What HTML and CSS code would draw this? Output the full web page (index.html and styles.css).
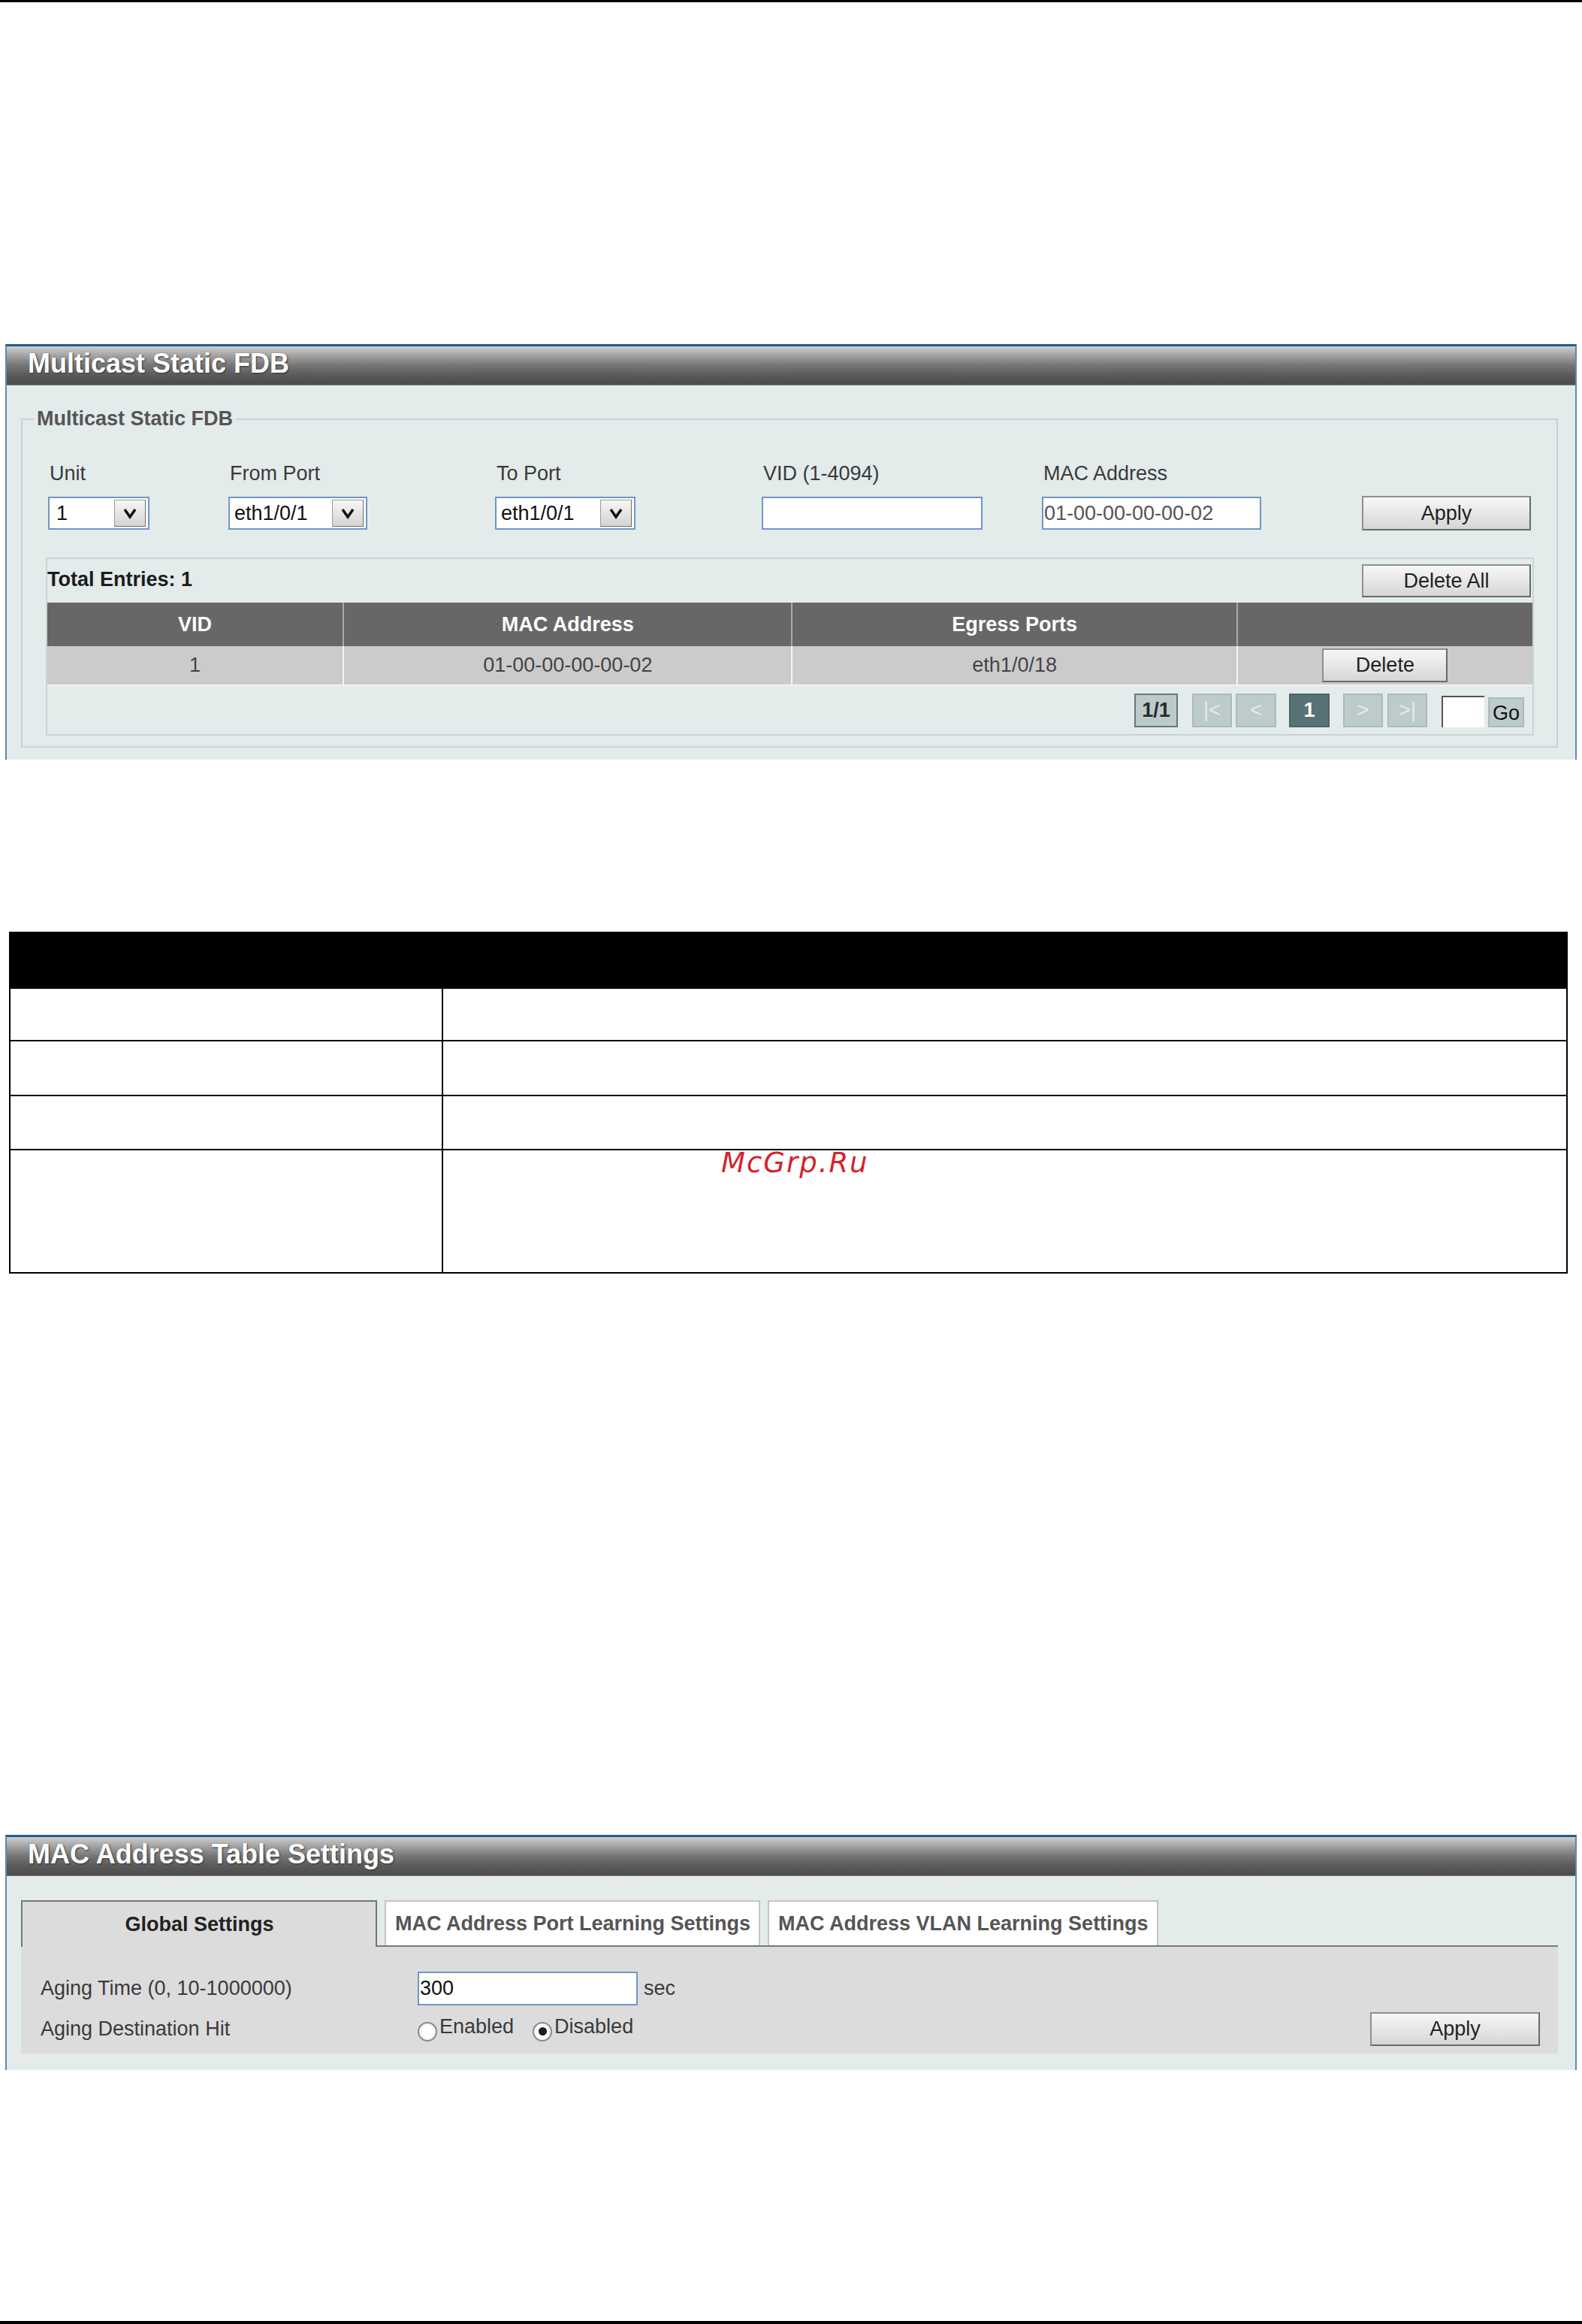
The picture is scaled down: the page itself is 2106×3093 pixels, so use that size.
FILE: index.html
```html
<!DOCTYPE html>
<html lang="en">
<head>
<meta charset="utf-8">
<title>Multicast Static FDB</title>
<link rel="stylesheet" href="styles.css">
</head>
<body>
<div class="topline"></div>

<section class="panel panel-fdb">
  <div class="panel-head">Multicast Static FDB</div>
  <div class="panel-body">
    <fieldset class="group">
      <legend>Multicast Static FDB</legend>
      <div class="fields">
        <div class="field f-unit">
          <div class="label">Unit</div>
          <div class="select s-unit"><span class="sel-text">1</span><span class="sel-btn"><svg class="chev" viewBox="0 0 20 16" width="20" height="16"><polyline points="3,3 10,13 17,3" fill="none" stroke="#111" stroke-width="3.5"/></svg></span></div>
        </div>
        <div class="field f-port">
          <div class="label">From Port</div>
          <div class="select s-port"><span class="sel-text">eth1/0/1</span><span class="sel-btn"><svg class="chev" viewBox="0 0 20 16" width="20" height="16"><polyline points="3,3 10,13 17,3" fill="none" stroke="#111" stroke-width="3.5"/></svg></span></div>
        </div>
        <div class="field f-port">
          <div class="label">To Port</div>
          <div class="select s-port2"><span class="sel-text">eth1/0/1</span><span class="sel-btn"><svg class="chev" viewBox="0 0 20 16" width="20" height="16"><polyline points="3,3 10,13 17,3" fill="none" stroke="#111" stroke-width="3.5"/></svg></span></div>
        </div>
        <div class="field f-vid">
          <div class="label">VID (1-4094)</div>
          <div class="input i-vid"></div>
        </div>
        <div class="field f-mac">
          <div class="label">MAC Address</div>
          <div class="input i-mac">01-00-00-00-00-02</div>
        </div>
        <button class="btn btn-apply">Apply</button>
      </div>

      <div class="entries">
        <div class="entries-top">
          <span class="total">Total Entries: 1</span>
          <button class="btn btn-delall">Delete All</button>
        </div>
        <table class="grid">
          <colgroup><col class="c1"><col class="c2"><col class="c3"><col class="c4"></colgroup>
          <thead>
            <tr><th>VID</th><th>MAC Address</th><th>Egress Ports</th><th></th></tr>
          </thead>
          <tbody>
            <tr><td>1</td><td>01-00-00-00-00-02</td><td>eth1/0/18</td><td><button class="btn btn-del">Delete</button></td></tr>
          </tbody>
        </table>
        <div class="pager">
          <span class="pg pg-info">1/1</span>
          <span class="pg pg-dis pg-first">|&lt;</span>
          <span class="pg pg-dis pg-prev">&lt;</span>
          <span class="pg pg-cur">1</span>
          <span class="pg pg-dis pg-next">&gt;</span>
          <span class="pg pg-dis pg-last">&gt;|</span>
          <span class="pg-input"></span>
          <span class="pg pg-go">Go</span>
        </div>
      </div>
    </fieldset>
  </div>
</section>

<div class="desc-wrap">
  <table class="desc">
    <colgroup><col class="d1"><col class="d2"></colgroup>
    <thead><tr class="dh"><th></th><th></th></tr></thead>
    <tbody>
      <tr class="r1"><td></td><td></td></tr>
      <tr class="r2"><td></td><td></td></tr>
      <tr class="r3"><td></td><td></td></tr>
      <tr class="r4"><td></td><td></td></tr>
    </tbody>
  </table>
  <div class="watermark">McGrp.Ru</div>
</div>

<section class="panel panel-mac">
  <div class="panel-head">MAC Address Table Settings</div>
  <div class="panel-body body-mac">
    <div class="tabs">
      <div class="tab tab-active">Global Settings</div>
      <div class="tab">MAC Address Port Learning Settings</div>
      <div class="tab">MAC Address VLAN Learning Settings</div>
    </div>
    <div class="tab-content">
      <div class="row">
        <span class="row-label">Aging Time (0, 10-1000000)</span>
        <span class="input i-aging">300</span>
        <span class="unit">sec</span>
      </div>
      <div class="row">
        <span class="row-label">Aging Destination Hit</span>
        <span class="radio"></span><span class="radio-text">Enabled</span>
        <span class="radio radio-on"></span><span class="radio-text">Disabled</span>
        <button class="btn btn-apply2">Apply</button>
      </div>
    </div>
  </div>
</section>

<div class="bottomline"></div>
</body>
</html>
```

FILE: styles.css
```css
* { box-sizing: border-box; }

html, body {
  margin: 0;
  padding: 0;
  background: #ffffff;
}

body {
  font-family: "Liberation Sans", Arial, sans-serif;
  font-size: 27px;
  color: #333;
  width: 2106px;
}

.topline {
  height: 3px;
  background: #000;
}

.bottomline {
  height: 5px;
  background: #000;
  margin-top: 334px;
}

/* Panels */
.panel {
  margin: 455px 7px 0 7px;
  border-top: 3px solid #1f5d8c;
  border-left: 2px solid #5f89ae;
  border-right: 2px solid #5f89ae;
}

.panel-mac {
  margin-top: 747px;
}

.panel-head {
  height: 52px;
  padding: 2px 0 0 28px;
  line-height: 41px;
  font-size: 36px;
  font-weight: bold;
  color: #fff;
  text-shadow: 1px 1px 2px #333, 0 0 1px #666;
  background: linear-gradient(#cfcfcf 0%, #a6a6a6 22%, #787878 48%, #5a5a5a 75%, #4c4c4c 100%);
  border-bottom: 1px solid #7c8484;
}

.panel-body {
  background: #e3ebeb;
  padding: 29px 23px 16px 19px;
}

/* Fieldset */
.group {
  margin: 0;
  padding: 0 0 14px 15px;
  border: 2px solid #c7d2d2;
  min-width: 0;
}

.group legend {
  padding: 0 4px;
  font-weight: bold;
  color: #555;
  line-height: 31px;
}

.fields {
  display: flex;
  align-items: flex-end;
  margin-top: 42px;
  padding-left: 19px;
}

.field {
  display: flex;
  flex-direction: column;
}

.f-unit { width: 240px; }
.f-port { width: 355px; }
.f-vid { width: 373px; }
.f-mac { width: 292px; }

.label {
  line-height: 31px;
  margin-bottom: 15px;
  color: #3a3a3a;
  padding-left: 2px;
}

.select {
  display: flex;
  align-items: center;
  height: 44px;
  background: #fff;
  border: 2px solid #6f97c6;
  padding: 2px 3px 2px 0;
}

.s-unit { width: 135px; }
.s-port { width: 185px; }
.s-port2 { width: 187px; }

.sel-text {
  flex: 1;
  padding-left: 9px;
  color: #111;
}

.s-port .sel-text, .s-port2 .sel-text { padding-left: 6px; }

.sel-btn {
  width: 42px;
  height: 36px;
  display: flex;
  align-items: center;
  justify-content: center;
  background: linear-gradient(#f6f6f6, #d4d4d4);
  border: 1px solid #9a9a9a;
  border-right-color: #6e6e6e;
  border-bottom-color: #6e6e6e;
}

.chev { display: block; }

.input {
  display: flex;
  align-items: center;
  height: 44px;
  background: #fff;
  border: 2px solid #6f97c6;
  color: #555;
}

.i-vid { width: 294px; }
.i-mac { width: 292px; padding-left: 1px; }

.btn {
  font-family: "Liberation Sans", Arial, sans-serif;
  font-size: 27px;
  color: #222;
  background: linear-gradient(#f7f7f7, #d6d6d6);
  border: 2px solid #8f8f8f;
  border-right-color: #6a6a6a;
  border-bottom-color: #6a6a6a;
  padding: 0;
  margin: 0;
}

.btn-apply {
  width: 225px;
  height: 46px;
  margin-left: auto;
  margin-right: 34px;
  margin-bottom: -1px;
}

/* Entries box */
.entries {
  margin: 37px 30px 0 16px;
  border: 2px solid #cbd4d4;
}

.entries-top {
  height: 58px;
  display: flex;
  align-items: center;
  justify-content: space-between;
  padding-right: 2px;
}

.total {
  font-weight: bold;
  color: #1c1c1c;
  padding-bottom: 4px;
}

.btn-delall {
  width: 225px;
  height: 44px;
}

.grid {
  width: 100%;
  border-collapse: collapse;
  table-layout: fixed;
}

.grid .c1 { width: 394px; }
.grid .c2 { width: 597px; }
.grid .c3 { width: 592px; }
.grid .c4 { width: 393px; }

.grid th {
  height: 58px;
  background: #676767;
  color: #fff;
  font-weight: bold;
  text-align: center;
  padding: 0;
  border-right: 2px solid #a9a9a9;
}

.grid th:last-child, .grid td:last-child { border-right: none; }

.grid td {
  height: 52px;
  background: #cbcbcb;
  color: #444;
  text-align: center;
  padding: 0;
  border-right: 2px solid #f4f4f4;
  border-bottom: 2px solid #f4f4f4;
}

.btn-del {
  width: 167px;
  height: 45px;
  vertical-align: middle;
}

.pager {
  height: 64px;
  display: flex;
  align-items: center;
  justify-content: flex-end;
  padding-right: 11px;
}

.pg {
  height: 45px;
  display: flex;
  align-items: center;
  justify-content: center;
  border: 2px solid #aabbbb;
  background: #bdcbcc;
  color: #e3ebeb;
}

.pg-info {
  width: 58px;
  border-color: #647979;
  background: #bccaca;
  color: #2a2a2a;
  font-weight: bold;
  margin-right: 19px;
}

.pg-first { width: 53px; margin-right: 5px; }
.pg-prev { width: 54px; margin-right: 17px; }

.pg-cur {
  width: 54px;
  background: #587174;
  border-color: #4c6467;
  color: #fff;
  font-weight: bold;
  margin-right: 18px;
}

.pg-next { width: 53px; margin-right: 6px; }
.pg-last { width: 53px; margin-right: 19px; }

.pg-input {
  width: 57px;
  height: 42px;
  margin-top: 3px;
  background: #fff;
  border-top: 2px solid #555;
  border-left: 2px solid #555;
  margin-right: 5px;
}

.pg-go {
  width: 48px;
  height: 40px;
  margin-top: 5px;
  color: #111;
  align-items: flex-end;
  padding-bottom: 1px;
}

/* Description table */
.desc-wrap {
  position: relative;
  margin: 229px 0 0 12px;
  width: 2075px;
}

.desc {
  width: 2075px;
  border-collapse: collapse;
  table-layout: fixed;
}

.desc .d1 { width: 576px; }

.desc th, .desc td {
  border: 2px solid #000;
  padding: 0;
}

.desc .dh th {
  height: 74px;
  background: #000;
}

.desc .r1 td { height: 70px; }
.desc .r2 td { height: 73px; }
.desc .r3 td { height: 72px; }
.desc .r4 td { height: 164px; }

.watermark {
  position: absolute;
  left: 948px;
  top: 286px;
  font-family: "DejaVu Sans", sans-serif;
  font-style: italic;
  font-size: 37px;
  letter-spacing: 2px;
  color: #d4232d;
  line-height: normal;
}

/* MAC Address Table Settings */
.body-mac {
  padding-top: 32px;
  padding-bottom: 22px;
}

.tabs {
  display: flex;
  gap: 10px;
  height: 62px;
  border-bottom: 2px solid #7a7a7a;
}

.tab {
  height: 60px;
  display: flex;
  align-items: center;
  padding: 0 11px 0 12px;
  background: #fff;
  border: 2px solid #c4c4c4;
  border-bottom: none;
  font-weight: bold;
  color: #555;
}

.tab-active {
  width: 474px;
  height: 62px;
  justify-content: center;
  background: #dcdcdc;
  border-color: #767676;
  color: #222;
}

.tab-content {
  background: #dcdcdc;
  padding: 33px 24px 10px 26px;
}

.row {
  display: flex;
  align-items: center;
  height: 45px;
}

.row + .row { margin-top: 9px; }

.row-label {
  width: 502px;
  color: #3a3a3a;
}

.i-aging {
  width: 293px;
  height: 45px;
  color: #111;
  padding-left: 1px;
}

.unit {
  margin-left: 8px;
  color: #3a3a3a;
}

.radio {
  width: 26px;
  height: 26px;
  border-radius: 50%;
  border: 2px solid #8a8a8a;
  background: radial-gradient(circle, #ffffff 40%, #e6e6e6 100%);
  margin-top: 6px;
  display: flex;
  align-items: center;
  justify-content: center;
}

.radio-on::after {
  content: "";
  width: 11px;
  height: 11px;
  border-radius: 50%;
  background: #1a1a1a;
}

.radio-text {
  color: #3a3a3a;
  margin-left: 3px;
  margin-right: 25px;
  padding-bottom: 6px;
}

.btn-apply2 {
  width: 226px;
  height: 45px;
  margin-left: auto;
}
```
